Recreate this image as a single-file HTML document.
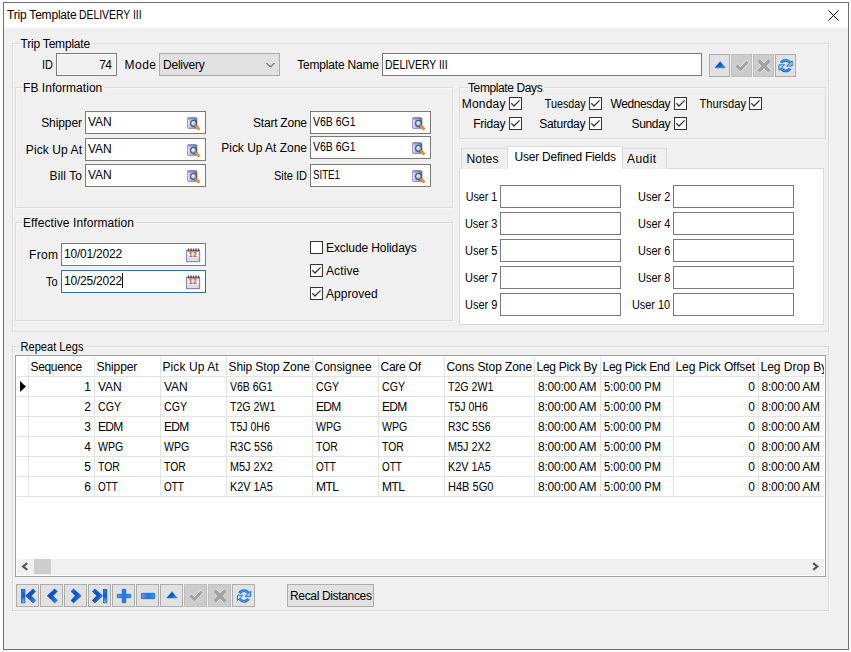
<!DOCTYPE html><html><head><meta charset="utf-8"><style>
html,body{margin:0;padding:0;background:#fff;width:851px;height:652px;overflow:hidden}
body{position:relative;font-family:"Liberation Sans",sans-serif;font-size:12px;color:#000}
div{position:absolute;box-sizing:border-box}
.t{white-space:nowrap;line-height:14px}
.r{text-align:right}
.cap{white-space:nowrap;line-height:14px;background:#f0f0f0;padding:0 1.5px 0 0.5px}
.grp{border:1px solid #dcdcdc}
.bx{border:1px solid #7a7a7a;background:#fff}
.ic{width:15px;height:15px}
.ic svg{display:block}
.cb{width:13px;height:13px;border:1px solid #333;background:#fff}
.cb svg{position:absolute;left:0;top:0}
.btn{border:1px solid #adadad;background:#e1e1e1}
.gl{background:#e3e3e3}
</style></head><body>
<svg width="0" height="0" style="position:absolute"><defs>
<linearGradient id="gBody" x1="0" y1="0" x2="1" y2="0"><stop offset="0" stop-color="#d8d8f4"/><stop offset="0.6" stop-color="#9c9cd4"/><stop offset="1" stop-color="#4e4e98"/></linearGradient>
<radialGradient id="gLens" cx="0.35" cy="0.35" r="0.7"><stop offset="0" stop-color="#f0fdff"/><stop offset="1" stop-color="#5cbbe8"/></radialGradient>
<linearGradient id="gBlue" x1="0" y1="0" x2="1" y2="1"><stop offset="0" stop-color="#2a6ad0"/><stop offset="0.45" stop-color="#0a50c6"/><stop offset="1" stop-color="#1c9cff"/></linearGradient>
<linearGradient id="gBlueV" x1="0" y1="0" x2="0" y2="1"><stop offset="0" stop-color="#2a7ee8"/><stop offset="0.5" stop-color="#0c5ad0"/><stop offset="1" stop-color="#6cc8ff"/></linearGradient>
<linearGradient id="gBlueH" x1="0" y1="0" x2="1" y2="0"><stop offset="0" stop-color="#6a9ae0"/><stop offset="0.5" stop-color="#1a78ea"/><stop offset="1" stop-color="#10a8ff"/></linearGradient>
</defs></svg>
<div style="left:3px;top:2px;width:846px;height:648px;border:1px solid #707070;background:#f0f0f0"></div>
<div style="left:4px;top:3px;width:844px;height:25px;background:#fff"></div>
<div class="t" style="left:7px;top:8px;letter-spacing:-0.2px;">Trip Template</div>
<div class="t" style="left:79.2px;top:8px;letter-spacing:0.0px;transform:scaleX(0.8657);transform-origin:0 0;">DELIVERY III</div>
<svg style="position:absolute;left:828px;top:10px" width="11" height="11" viewBox="0 0 11 11"><path d="M0.5 0.5 L10.5 10.5 M10.5 0.5 L0.5 10.5" stroke="#000" stroke-width="1"/></svg>
<div style="left:13px;top:44px;width:817px;height:289px;border:1px solid #f5f5f5"></div>
<div class="grp" style="left:12px;top:43px;width:817px;height:289px"></div>
<div class="cap" style="left:20px;top:37px;letter-spacing:-0.2px;">Trip Template</div>
<div class="t r" style="right:798.5px;top:58px;letter-spacing:0.0px;margin-right:-0.0px;transform:scaleX(0.9091);transform-origin:100% 0;">ID</div>
<div style="left:56px;top:53px;width:61px;height:23px;border:1px solid #7a7a7a;box-shadow:inset 0 0 0 1px #fff;background:#f0f0f0"></div>
<div class="t r" style="right:739px;top:58px;letter-spacing:-0.5px;margin-right:0.5px;">74</div>
<div class="t r" style="right:695px;top:58px;letter-spacing:0.467px;margin-right:-0.467px;">Mode</div>
<div class="btn" style="left:159px;top:53px;width:121px;height:23px"></div>
<div class="t" style="left:163px;top:58px;letter-spacing:-0.214px;">Delivery</div>
<svg style="position:absolute;left:266.4px;top:61.8px" width="10" height="7" viewBox="0 0 10 7"><path d="M0.5 1 L4.5 5 L8.5 1" fill="none" stroke="#333" stroke-width="1"/></svg>
<div class="t r" style="right:472px;top:58px;letter-spacing:-0.183px;margin-right:0.183px;">Template Name</div>
<div class="bx" style="left:382px;top:53px;width:320px;height:23px;"></div>
<div class="t" style="left:385px;top:58px;letter-spacing:0.0px;transform:scaleX(0.8657);transform-origin:0 0;">DELIVERY III</div>
<div class="btn" style="left:709px;top:54px;width:21px;height:23px;"></div>
<div class="btn" style="left:731px;top:54px;width:21px;height:23px;background:#cccccc;border-color:#bfbfbf"></div>
<div class="btn" style="left:753px;top:54px;width:21px;height:23px;background:#cccccc;border-color:#bfbfbf"></div>
<div class="btn" style="left:775px;top:54px;width:21px;height:23px;"></div>
<svg style="position:absolute;left:709px;top:54px" width="21" height="23" viewBox="0 0 21 23"><path d="M6 13.8 L11.1 7.6 L16.2 13.8 Z" fill="url(#gBlue)" stroke="#1560d0" stroke-width="0.5" stroke-linejoin="round"/></svg>
<svg style="position:absolute;left:731px;top:54px" width="21" height="23" viewBox="0 0 21 23"><path transform="translate(3.8 6)" d="M0 6.5 L2.7 3.8 L5.7 6.8 L11.7 0 L14.4 2.7 L5.7 12 Z" fill="#a2a2a2" stroke="#eeeeee" stroke-width="0.8" stroke-linejoin="miter"/></svg>
<svg style="position:absolute;left:753px;top:54px" width="21" height="23" viewBox="0 0 21 23"><g transform="translate(4 4.8)"><path d="M1.6 1.6 L12.4 12.4 M12.4 1.6 L1.6 12.4" stroke="#eeeeee" stroke-width="4.9"/><path d="M1.6 1.6 L12.4 12.4 M12.4 1.6 L1.6 12.4" stroke="#a2a2a2" stroke-width="3.7"/></g></svg>
<svg style="position:absolute;left:775px;top:54px" width="21" height="23" viewBox="0 0 21 23"><g transform="translate(0.6 1.6)"><path d="M5.51 7.19 A5.3 5.3 0 0 1 14.34 6.96" fill="none" stroke="#1565d8" stroke-width="2.8"/><path d="M5.51 7.19 A5.3 5.3 0 0 1 14.34 6.96" fill="none" stroke="#3a98f4" stroke-width="1.4"/><path d="M16.6 5.2 L16.6 10.4 L11 10.4 Z" fill="#9ad4ff" stroke="#1565d8" stroke-width="0.9" stroke-linejoin="round"/><path d="M14.49 12.81 A5.3 5.3 0 0 1 5.66 13.04" fill="none" stroke="#1565d8" stroke-width="2.8"/><path d="M14.49 12.81 A5.3 5.3 0 0 1 5.66 13.04" fill="none" stroke="#3a98f4" stroke-width="1.4"/><path d="M3.4 9.2 L3.4 14.7 L9 9.2 Z" fill="#b8e2ff" stroke="#1565d8" stroke-width="0.9" stroke-linejoin="round"/></g></svg>
<div style="left:16px;top:88px;width:438px;height:121px;border:1px solid #f5f5f5"></div>
<div class="grp" style="left:15px;top:87px;width:438px;height:121px"></div>
<div class="cap" style="left:22.5px;top:81px;letter-spacing:0.046px;">FB Information</div>
<div class="t r" style="right:769px;top:116px;letter-spacing:-0.083px;margin-right:0.083px;">Shipper</div>
<div class="bx" style="left:85px;top:111px;width:121px;height:23px;"></div>
<div class="t" style="left:88px;top:115px;letter-spacing:-0.1px;">VAN</div>
<div class="ic" style="left:187px;top:117px"><svg width="15" height="15" viewBox="0 0 15 15"><defs><linearGradient id="gTop" x1="0" y1="0" x2="0" y2="1"><stop offset="0" stop-color="#6a6ab0" stop-opacity="0.9"/><stop offset="0.25" stop-color="#9a9ad0" stop-opacity="0"/></linearGradient></defs><rect x="0.4" y="0.4" width="9.6" height="11.2" rx="1.6" fill="url(#gBody)" stroke="#8080b8" stroke-width="0.8"/><rect x="0.8" y="0.8" width="8.8" height="10.4" rx="1.2" fill="url(#gTop)"/><path d="M1.8 3v6.5" stroke="#ffffff" stroke-width="0.9" stroke-dasharray="1.2 0.9" opacity="0.8"/><circle cx="6.5" cy="6.4" r="2.9" fill="url(#gLens)" stroke="#50505e" stroke-width="1.1"/><path d="M9.2 9.2 L11.6 11.7" stroke="#f27c1c" stroke-width="2.7" stroke-linecap="round"/><path d="M9.8 9.9 L11.2 11.3" stroke="#ffd040" stroke-width="0.8" stroke-linecap="round"/></svg></div>
<div class="t r" style="right:769px;top:143px;letter-spacing:0.089px;margin-right:-0.089px;">Pick Up At</div>
<div class="bx" style="left:85px;top:138px;width:121px;height:23px;"></div>
<div class="t" style="left:88px;top:142px;letter-spacing:-0.1px;">VAN</div>
<div class="ic" style="left:187px;top:144px"><svg width="15" height="15" viewBox="0 0 15 15"><defs><linearGradient id="gTop" x1="0" y1="0" x2="0" y2="1"><stop offset="0" stop-color="#6a6ab0" stop-opacity="0.9"/><stop offset="0.25" stop-color="#9a9ad0" stop-opacity="0"/></linearGradient></defs><rect x="0.4" y="0.4" width="9.6" height="11.2" rx="1.6" fill="url(#gBody)" stroke="#8080b8" stroke-width="0.8"/><rect x="0.8" y="0.8" width="8.8" height="10.4" rx="1.2" fill="url(#gTop)"/><path d="M1.8 3v6.5" stroke="#ffffff" stroke-width="0.9" stroke-dasharray="1.2 0.9" opacity="0.8"/><circle cx="6.5" cy="6.4" r="2.9" fill="url(#gLens)" stroke="#50505e" stroke-width="1.1"/><path d="M9.2 9.2 L11.6 11.7" stroke="#f27c1c" stroke-width="2.7" stroke-linecap="round"/><path d="M9.8 9.9 L11.2 11.3" stroke="#ffd040" stroke-width="0.8" stroke-linecap="round"/></svg></div>
<div class="t r" style="right:769px;top:169px;letter-spacing:0.1px;margin-right:-0.1px;">Bill To</div>
<div class="bx" style="left:85px;top:164px;width:121px;height:23px;"></div>
<div class="t" style="left:88px;top:168px;letter-spacing:-0.1px;">VAN</div>
<div class="ic" style="left:187px;top:170px"><svg width="15" height="15" viewBox="0 0 15 15"><defs><linearGradient id="gTop" x1="0" y1="0" x2="0" y2="1"><stop offset="0" stop-color="#6a6ab0" stop-opacity="0.9"/><stop offset="0.25" stop-color="#9a9ad0" stop-opacity="0"/></linearGradient></defs><rect x="0.4" y="0.4" width="9.6" height="11.2" rx="1.6" fill="url(#gBody)" stroke="#8080b8" stroke-width="0.8"/><rect x="0.8" y="0.8" width="8.8" height="10.4" rx="1.2" fill="url(#gTop)"/><path d="M1.8 3v6.5" stroke="#ffffff" stroke-width="0.9" stroke-dasharray="1.2 0.9" opacity="0.8"/><circle cx="6.5" cy="6.4" r="2.9" fill="url(#gLens)" stroke="#50505e" stroke-width="1.1"/><path d="M9.2 9.2 L11.6 11.7" stroke="#f27c1c" stroke-width="2.7" stroke-linecap="round"/><path d="M9.8 9.9 L11.2 11.3" stroke="#ffd040" stroke-width="0.8" stroke-linecap="round"/></svg></div>
<div class="t r" style="right:544px;top:116px;letter-spacing:-0.233px;margin-right:0.233px;">Start Zone</div>
<div class="bx" style="left:310px;top:111px;width:121px;height:23px;"></div>
<div class="t" style="left:313px;top:115px;letter-spacing:0.0px;transform:scaleX(0.8729);transform-origin:0 0;">V6B 6G1</div>
<div class="ic" style="left:412px;top:117px"><svg width="15" height="15" viewBox="0 0 15 15"><defs><linearGradient id="gTop" x1="0" y1="0" x2="0" y2="1"><stop offset="0" stop-color="#6a6ab0" stop-opacity="0.9"/><stop offset="0.25" stop-color="#9a9ad0" stop-opacity="0"/></linearGradient></defs><rect x="0.4" y="0.4" width="9.6" height="11.2" rx="1.6" fill="url(#gBody)" stroke="#8080b8" stroke-width="0.8"/><rect x="0.8" y="0.8" width="8.8" height="10.4" rx="1.2" fill="url(#gTop)"/><path d="M1.8 3v6.5" stroke="#ffffff" stroke-width="0.9" stroke-dasharray="1.2 0.9" opacity="0.8"/><circle cx="6.5" cy="6.4" r="2.9" fill="url(#gLens)" stroke="#50505e" stroke-width="1.1"/><path d="M9.2 9.2 L11.6 11.7" stroke="#f27c1c" stroke-width="2.7" stroke-linecap="round"/><path d="M9.8 9.9 L11.2 11.3" stroke="#ffd040" stroke-width="0.8" stroke-linecap="round"/></svg></div>
<div class="t r" style="right:544px;top:141px;letter-spacing:-0.021px;margin-right:0.021px;">Pick Up At Zone</div>
<div class="bx" style="left:310px;top:136px;width:121px;height:23px;"></div>
<div class="t" style="left:313px;top:140px;letter-spacing:0.0px;transform:scaleX(0.8729);transform-origin:0 0;">V6B 6G1</div>
<div class="ic" style="left:412px;top:142px"><svg width="15" height="15" viewBox="0 0 15 15"><defs><linearGradient id="gTop" x1="0" y1="0" x2="0" y2="1"><stop offset="0" stop-color="#6a6ab0" stop-opacity="0.9"/><stop offset="0.25" stop-color="#9a9ad0" stop-opacity="0"/></linearGradient></defs><rect x="0.4" y="0.4" width="9.6" height="11.2" rx="1.6" fill="url(#gBody)" stroke="#8080b8" stroke-width="0.8"/><rect x="0.8" y="0.8" width="8.8" height="10.4" rx="1.2" fill="url(#gTop)"/><path d="M1.8 3v6.5" stroke="#ffffff" stroke-width="0.9" stroke-dasharray="1.2 0.9" opacity="0.8"/><circle cx="6.5" cy="6.4" r="2.9" fill="url(#gLens)" stroke="#50505e" stroke-width="1.1"/><path d="M9.2 9.2 L11.6 11.7" stroke="#f27c1c" stroke-width="2.7" stroke-linecap="round"/><path d="M9.8 9.9 L11.2 11.3" stroke="#ffd040" stroke-width="0.8" stroke-linecap="round"/></svg></div>
<div class="t r" style="right:544px;top:169px;letter-spacing:0.0px;margin-right:-0.0px;transform:scaleX(0.92);transform-origin:100% 0;">Site ID</div>
<div class="bx" style="left:310px;top:164px;width:121px;height:23px;"></div>
<div class="t" style="left:313px;top:168px;letter-spacing:0.0px;transform:scaleX(0.8094);transform-origin:0 0;">SITE1</div>
<div class="ic" style="left:412px;top:170px"><svg width="15" height="15" viewBox="0 0 15 15"><defs><linearGradient id="gTop" x1="0" y1="0" x2="0" y2="1"><stop offset="0" stop-color="#6a6ab0" stop-opacity="0.9"/><stop offset="0.25" stop-color="#9a9ad0" stop-opacity="0"/></linearGradient></defs><rect x="0.4" y="0.4" width="9.6" height="11.2" rx="1.6" fill="url(#gBody)" stroke="#8080b8" stroke-width="0.8"/><rect x="0.8" y="0.8" width="8.8" height="10.4" rx="1.2" fill="url(#gTop)"/><path d="M1.8 3v6.5" stroke="#ffffff" stroke-width="0.9" stroke-dasharray="1.2 0.9" opacity="0.8"/><circle cx="6.5" cy="6.4" r="2.9" fill="url(#gLens)" stroke="#50505e" stroke-width="1.1"/><path d="M9.2 9.2 L11.6 11.7" stroke="#f27c1c" stroke-width="2.7" stroke-linecap="round"/><path d="M9.8 9.9 L11.2 11.3" stroke="#ffd040" stroke-width="0.8" stroke-linecap="round"/></svg></div>
<div style="left:16px;top:223px;width:438px;height:99px;border:1px solid #f5f5f5"></div>
<div class="grp" style="left:15px;top:222px;width:438px;height:99px"></div>
<div class="cap" style="left:22.5px;top:216px;letter-spacing:0.09px;">Effective Information</div>
<div class="t r" style="right:793px;top:248px;letter-spacing:0.333px;margin-right:-0.333px;">From</div>
<div class="bx" style="left:61px;top:243px;width:145px;height:23px;"></div>
<div class="t" style="left:64px;top:247px;letter-spacing:-0.211px;">10/01/2022</div>
<div class="ic" style="left:184px;top:246px;width:18px;height:18px"><svg width="18" height="18" viewBox="0 0 18 18"><defs><linearGradient id="gCal" x1="0" y1="0" x2="0" y2="1"><stop offset="0" stop-color="#ffffff"/><stop offset="1" stop-color="#dfe4f6"/></linearGradient></defs><rect x="2.6" y="4.4" width="13" height="11.2" fill="url(#gCal)" stroke="#8282c2" stroke-width="1.1"/><path d="M3.6 12.6h11 M3.6 13.9h11" stroke="#d0d8f0" stroke-width="0.9"/><path d="M3.8 3.8h11.4" stroke="#3a3a3a" stroke-width="2.4" stroke-dasharray="1.5 1" opacity="0.85"/><path d="M4 5.3h11" stroke="#666" stroke-width="0.8"/><text x="4.9" y="11.3" font-family="Liberation Sans" font-weight="bold" font-size="6.3" letter-spacing="0.9" fill="#ff4200" stroke="#ff5a10" stroke-width="0.2">12</text><rect x="14" y="12" width="1.1" height="2.6" fill="#f2b27a"/></svg></div>
<div class="t r" style="right:793px;top:275px;letter-spacing:0.0px;margin-right:-0.0px;transform:scaleX(0.9167);transform-origin:100% 0;">To</div>
<div class="bx" style="left:61px;top:270px;width:145px;height:23px;border-color:#0078d7"></div>
<div class="t" style="left:64px;top:274px;letter-spacing:-0.211px;">10/25/2022</div>
<div class="ic" style="left:184px;top:273px;width:18px;height:18px"><svg width="18" height="18" viewBox="0 0 18 18"><defs><linearGradient id="gCal" x1="0" y1="0" x2="0" y2="1"><stop offset="0" stop-color="#ffffff"/><stop offset="1" stop-color="#dfe4f6"/></linearGradient></defs><rect x="2.6" y="4.4" width="13" height="11.2" fill="url(#gCal)" stroke="#8282c2" stroke-width="1.1"/><path d="M3.6 12.6h11 M3.6 13.9h11" stroke="#d0d8f0" stroke-width="0.9"/><path d="M3.8 3.8h11.4" stroke="#3a3a3a" stroke-width="2.4" stroke-dasharray="1.5 1" opacity="0.85"/><path d="M4 5.3h11" stroke="#666" stroke-width="0.8"/><text x="4.9" y="11.3" font-family="Liberation Sans" font-weight="bold" font-size="6.3" letter-spacing="0.9" fill="#ff4200" stroke="#ff5a10" stroke-width="0.2">12</text><rect x="14" y="12" width="1.1" height="2.6" fill="#f2b27a"/></svg></div>
<div style="left:122px;top:273px;width:1px;height:15px;background:#000"></div>
<div class="cb" style="left:310px;top:241px"></div>
<div class="t" style="left:326px;top:241px;letter-spacing:-0.093px;">Exclude Holidays</div>
<div class="cb" style="left:310px;top:264px"><svg width="11" height="11" viewBox="0 0 11 11"><path d="M1.3 5.3 L4 8 L9.6 2.4" fill="none" stroke="#333" stroke-width="1.25"/></svg></div>
<div class="t" style="left:326px;top:264px;letter-spacing:0.12px;">Active</div>
<div class="cb" style="left:310px;top:287px"><svg width="11" height="11" viewBox="0 0 11 11"><path d="M1.3 5.3 L4 8 L9.6 2.4" fill="none" stroke="#333" stroke-width="1.25"/></svg></div>
<div class="t" style="left:326px;top:287px;letter-spacing:0.029px;">Approved</div>
<div style="left:460px;top:88px;width:367px;height:52px;border:1px solid #f5f5f5"></div>
<div class="grp" style="left:459px;top:87px;width:367px;height:52px"></div>
<div class="cap" style="left:467.5px;top:81px;letter-spacing:-0.392px;">Template Days</div>
<div class="t r" style="right:345.5px;top:97px;letter-spacing:0.2px;margin-right:-0.2px;">Monday</div>
<div class="cb" style="left:509px;top:97px"><svg width="11" height="11" viewBox="0 0 11 11"><path d="M1.3 5.3 L4 8 L9.6 2.4" fill="none" stroke="#333" stroke-width="1.25"/></svg></div>
<div class="t r" style="right:265.5px;top:97px;letter-spacing:0.0px;margin-right:-0.0px;transform:scaleX(0.8935);transform-origin:100% 0;">Tuesday</div>
<div class="cb" style="left:589px;top:97px"><svg width="11" height="11" viewBox="0 0 11 11"><path d="M1.3 5.3 L4 8 L9.6 2.4" fill="none" stroke="#333" stroke-width="1.25"/></svg></div>
<div class="t r" style="right:180.5px;top:97px;letter-spacing:-0.388px;margin-right:0.388px;">Wednesday</div>
<div class="cb" style="left:674px;top:97px"><svg width="11" height="11" viewBox="0 0 11 11"><path d="M1.3 5.3 L4 8 L9.6 2.4" fill="none" stroke="#333" stroke-width="1.25"/></svg></div>
<div class="t r" style="right:105.29999999999995px;top:97px;letter-spacing:0.0px;margin-right:-0.0px;transform:scaleX(0.93);transform-origin:100% 0;">Thursday</div>
<div class="cb" style="left:749px;top:97px"><svg width="11" height="11" viewBox="0 0 11 11"><path d="M1.3 5.3 L4 8 L9.6 2.4" fill="none" stroke="#333" stroke-width="1.25"/></svg></div>
<div class="t r" style="right:345.5px;top:117px;letter-spacing:-0.2px;margin-right:0.2px;">Friday</div>
<div class="cb" style="left:509px;top:117px"><svg width="11" height="11" viewBox="0 0 11 11"><path d="M1.3 5.3 L4 8 L9.6 2.4" fill="none" stroke="#333" stroke-width="1.25"/></svg></div>
<div class="t r" style="right:265.5px;top:117px;letter-spacing:-0.243px;margin-right:0.243px;">Saturday</div>
<div class="cb" style="left:589px;top:117px"><svg width="11" height="11" viewBox="0 0 11 11"><path d="M1.3 5.3 L4 8 L9.6 2.4" fill="none" stroke="#333" stroke-width="1.25"/></svg></div>
<div class="t r" style="right:180.5px;top:117px;letter-spacing:-0.34px;margin-right:0.34px;">Sunday</div>
<div class="cb" style="left:674px;top:117px"><svg width="11" height="11" viewBox="0 0 11 11"><path d="M1.3 5.3 L4 8 L9.6 2.4" fill="none" stroke="#333" stroke-width="1.25"/></svg></div>
<div style="left:459px;top:168px;width:365px;height:157px;border:1px solid #d9d9d9;background:#fff"></div>
<div style="left:461px;top:148px;width:47px;height:21px;border:1px solid #d9d9d9;border-bottom:none;background:#f0f0f0"></div>
<div style="left:622px;top:148px;width:45px;height:21px;border:1px solid #d9d9d9;border-bottom:none;background:#f0f0f0"></div>
<div style="left:507px;top:146px;width:116px;height:23px;border:1px solid #d9d9d9;border-bottom:none;background:#fff"></div>
<div class="t" style="left:466.5px;top:152px;letter-spacing:0.15px;">Notes</div>
<div class="t" style="left:514.5px;top:150px;letter-spacing:-0.222px;">User Defined Fields</div>
<div class="t" style="left:627px;top:152px;letter-spacing:0.45px;">Audit</div>
<div class="t r" style="right:354px;top:190px;letter-spacing:0.0px;margin-right:-0.0px;transform:scaleX(0.8971);transform-origin:100% 0;">User 1</div>
<div class="bx" style="left:500px;top:185px;width:121px;height:23px;"></div>
<div class="t r" style="right:181px;top:190px;letter-spacing:0.0px;margin-right:-0.0px;transform:scaleX(0.9147);transform-origin:100% 0;">User 2</div>
<div class="bx" style="left:673px;top:185px;width:121px;height:23px;"></div>
<div class="t r" style="right:354px;top:217px;letter-spacing:0.0px;margin-right:-0.0px;transform:scaleX(0.9176);transform-origin:100% 0;">User 3</div>
<div class="bx" style="left:500px;top:212px;width:121px;height:23px;"></div>
<div class="t r" style="right:181px;top:217px;letter-spacing:0.0px;margin-right:-0.0px;transform:scaleX(0.9147);transform-origin:100% 0;">User 4</div>
<div class="bx" style="left:673px;top:212px;width:121px;height:23px;"></div>
<div class="t r" style="right:354px;top:244px;letter-spacing:0.0px;margin-right:-0.0px;transform:scaleX(0.9147);transform-origin:100% 0;">User 5</div>
<div class="bx" style="left:500px;top:239px;width:121px;height:23px;"></div>
<div class="t r" style="right:181px;top:244px;letter-spacing:0.0px;margin-right:-0.0px;transform:scaleX(0.9147);transform-origin:100% 0;">User 6</div>
<div class="bx" style="left:673px;top:239px;width:121px;height:23px;"></div>
<div class="t r" style="right:354px;top:271px;letter-spacing:0.0px;margin-right:-0.0px;transform:scaleX(0.9147);transform-origin:100% 0;">User 7</div>
<div class="bx" style="left:500px;top:266px;width:121px;height:23px;"></div>
<div class="t r" style="right:181px;top:271px;letter-spacing:0.0px;margin-right:-0.0px;transform:scaleX(0.9147);transform-origin:100% 0;">User 8</div>
<div class="bx" style="left:673px;top:266px;width:121px;height:23px;"></div>
<div class="t r" style="right:354px;top:298px;letter-spacing:0.0px;margin-right:-0.0px;transform:scaleX(0.9147);transform-origin:100% 0;">User 9</div>
<div class="bx" style="left:500px;top:293px;width:121px;height:23px;"></div>
<div class="t r" style="right:181px;top:298px;letter-spacing:0.0px;margin-right:-0.0px;transform:scaleX(0.9073);transform-origin:100% 0;">User 10</div>
<div class="bx" style="left:673px;top:293px;width:121px;height:23px;"></div>
<div style="left:13px;top:347px;width:817px;height:265px;border:1px solid #f5f5f5"></div>
<div class="grp" style="left:12px;top:346px;width:817px;height:265px"></div>
<div class="cap" style="left:20px;top:340px;letter-spacing:0.0px;transform:scaleX(0.9254);transform-origin:0 0;">Repeat Legs</div>
<div style="left:15px;top:355px;width:811px;height:222px;border:1px solid #a0a0a0;background:#fff"></div>
<div class="gl" style="left:17px;top:376px;width:807px;height:1px"></div>
<div class="gl" style="left:17px;top:396px;width:807px;height:1px"></div>
<div class="gl" style="left:17px;top:416px;width:807px;height:1px"></div>
<div class="gl" style="left:17px;top:436px;width:807px;height:1px"></div>
<div class="gl" style="left:17px;top:456px;width:807px;height:1px"></div>
<div class="gl" style="left:17px;top:476px;width:807px;height:1px"></div>
<div class="gl" style="left:17px;top:496px;width:807px;height:1px"></div>
<div class="gl" style="left:28px;top:357px;width:1px;height:140px"></div>
<div class="gl" style="left:94px;top:357px;width:1px;height:140px"></div>
<div class="gl" style="left:160px;top:357px;width:1px;height:140px"></div>
<div class="gl" style="left:226px;top:357px;width:1px;height:140px"></div>
<div class="gl" style="left:312px;top:357px;width:1px;height:140px"></div>
<div class="gl" style="left:378px;top:357px;width:1px;height:140px"></div>
<div class="gl" style="left:444px;top:357px;width:1px;height:140px"></div>
<div class="gl" style="left:534px;top:357px;width:1px;height:140px"></div>
<div class="gl" style="left:600px;top:357px;width:1px;height:140px"></div>
<div class="gl" style="left:673px;top:357px;width:1px;height:140px"></div>
<div class="gl" style="left:758px;top:357px;width:1px;height:140px"></div>
<div class="t" style="left:30.5px;top:360px;letter-spacing:-0.343px;">Sequence</div>
<div class="t" style="left:96.5px;top:360px;letter-spacing:-0.083px;">Shipper</div>
<div class="t" style="left:162.5px;top:360px;letter-spacing:0.089px;">Pick Up At</div>
<div class="t" style="left:228.5px;top:360px;letter-spacing:-0.1px;">Ship Stop Zone</div>
<div class="t" style="left:314.5px;top:360px;letter-spacing:-0.037px;">Consignee</div>
<div class="t" style="left:380.5px;top:360px;letter-spacing:-0.25px;">Care Of</div>
<div class="t" style="left:446.5px;top:360px;letter-spacing:-0.085px;">Cons Stop Zone</div>
<div class="t" style="left:536.5px;top:360px;letter-spacing:-0.27px;">Leg Pick By</div>
<div class="t" style="left:602.5px;top:360px;letter-spacing:-0.291px;">Leg Pick End</div>
<div class="t" style="left:675.5px;top:360px;letter-spacing:-0.107px;">Leg Pick Offset</div>
<div style="left:758px;top:356px;width:65.5px;height:20px;overflow:hidden">
<div class="t" style="left:2.5px;top:4px;letter-spacing:0.0px">Leg Drop By</div></div>
<div class="t r" style="right:760px;top:380px;letter-spacing:0.0px;margin-right:-0.0px;">1</div>
<div class="t" style="left:98px;top:380px;letter-spacing:-0.1px;">VAN</div>
<div class="t" style="left:164px;top:380px;letter-spacing:-0.1px;">VAN</div>
<div class="t" style="left:230px;top:380px;letter-spacing:0.0px;transform:scaleX(0.8729);transform-origin:0 0;">V6B 6G1</div>
<div class="t" style="left:316px;top:380px;letter-spacing:0.0px;transform:scaleX(0.884);transform-origin:0 0;">CGY</div>
<div class="t" style="left:382px;top:380px;letter-spacing:0.0px;transform:scaleX(0.884);transform-origin:0 0;">CGY</div>
<div class="t" style="left:448px;top:380px;letter-spacing:0.0px;transform:scaleX(0.8824);transform-origin:0 0;">T2G 2W1</div>
<div class="t" style="left:538px;top:380px;letter-spacing:-0.233px;">8:00:00 AM</div>
<div class="t" style="left:604px;top:380px;letter-spacing:0.0px;transform:scaleX(0.93);transform-origin:0 0;">5:00:00 PM</div>
<div class="t r" style="right:96px;top:380px;letter-spacing:0.0px;margin-right:-0.0px;">0</div>
<div class="t" style="left:761.5px;top:380px;letter-spacing:-0.233px;">8:00:00 AM</div>
<div class="t r" style="right:760px;top:400px;letter-spacing:0.0px;margin-right:-0.0px;">2</div>
<div class="t" style="left:98px;top:400px;letter-spacing:0.0px;transform:scaleX(0.884);transform-origin:0 0;">CGY</div>
<div class="t" style="left:164px;top:400px;letter-spacing:0.0px;transform:scaleX(0.884);transform-origin:0 0;">CGY</div>
<div class="t" style="left:230px;top:400px;letter-spacing:0.0px;transform:scaleX(0.8824);transform-origin:0 0;">T2G 2W1</div>
<div class="t" style="left:316px;top:400px;letter-spacing:-0.75px;">EDM</div>
<div class="t" style="left:382px;top:400px;letter-spacing:-0.75px;">EDM</div>
<div class="t" style="left:448px;top:400px;letter-spacing:0.0px;transform:scaleX(0.8778);transform-origin:0 0;">T5J 0H6</div>
<div class="t" style="left:538px;top:400px;letter-spacing:-0.233px;">8:00:00 AM</div>
<div class="t" style="left:604px;top:400px;letter-spacing:0.0px;transform:scaleX(0.93);transform-origin:0 0;">5:00:00 PM</div>
<div class="t r" style="right:96px;top:400px;letter-spacing:0.0px;margin-right:-0.0px;">0</div>
<div class="t" style="left:761.5px;top:400px;letter-spacing:-0.233px;">8:00:00 AM</div>
<div class="t r" style="right:760px;top:420px;letter-spacing:0.0px;margin-right:-0.0px;">3</div>
<div class="t" style="left:98px;top:420px;letter-spacing:-0.75px;">EDM</div>
<div class="t" style="left:164px;top:420px;letter-spacing:-0.75px;">EDM</div>
<div class="t" style="left:230px;top:420px;letter-spacing:0.0px;transform:scaleX(0.8778);transform-origin:0 0;">T5J 0H6</div>
<div class="t" style="left:316px;top:420px;letter-spacing:0.0px;transform:scaleX(0.8821);transform-origin:0 0;">WPG</div>
<div class="t" style="left:382px;top:420px;letter-spacing:0.0px;transform:scaleX(0.8821);transform-origin:0 0;">WPG</div>
<div class="t" style="left:448px;top:420px;letter-spacing:0.0px;transform:scaleX(0.8766);transform-origin:0 0;">R3C 5S6</div>
<div class="t" style="left:538px;top:420px;letter-spacing:-0.233px;">8:00:00 AM</div>
<div class="t" style="left:604px;top:420px;letter-spacing:0.0px;transform:scaleX(0.93);transform-origin:0 0;">5:00:00 PM</div>
<div class="t r" style="right:96px;top:420px;letter-spacing:0.0px;margin-right:-0.0px;">0</div>
<div class="t" style="left:761.5px;top:420px;letter-spacing:-0.233px;">8:00:00 AM</div>
<div class="t r" style="right:760px;top:440px;letter-spacing:0.0px;margin-right:-0.0px;">4</div>
<div class="t" style="left:98px;top:440px;letter-spacing:0.0px;transform:scaleX(0.8821);transform-origin:0 0;">WPG</div>
<div class="t" style="left:164px;top:440px;letter-spacing:0.0px;transform:scaleX(0.8821);transform-origin:0 0;">WPG</div>
<div class="t" style="left:230px;top:440px;letter-spacing:0.0px;transform:scaleX(0.8766);transform-origin:0 0;">R3C 5S6</div>
<div class="t" style="left:316px;top:440px;letter-spacing:0.0px;transform:scaleX(0.864);transform-origin:0 0;">TOR</div>
<div class="t" style="left:382px;top:440px;letter-spacing:0.0px;transform:scaleX(0.864);transform-origin:0 0;">TOR</div>
<div class="t" style="left:448px;top:440px;letter-spacing:0.0px;transform:scaleX(0.9043);transform-origin:0 0;">M5J 2X2</div>
<div class="t" style="left:538px;top:440px;letter-spacing:-0.233px;">8:00:00 AM</div>
<div class="t" style="left:604px;top:440px;letter-spacing:0.0px;transform:scaleX(0.93);transform-origin:0 0;">5:00:00 PM</div>
<div class="t r" style="right:96px;top:440px;letter-spacing:0.0px;margin-right:-0.0px;">0</div>
<div class="t" style="left:761.5px;top:440px;letter-spacing:-0.233px;">8:00:00 AM</div>
<div class="t r" style="right:760px;top:460px;letter-spacing:0.0px;margin-right:-0.0px;">5</div>
<div class="t" style="left:98px;top:460px;letter-spacing:0.0px;transform:scaleX(0.864);transform-origin:0 0;">TOR</div>
<div class="t" style="left:164px;top:460px;letter-spacing:0.0px;transform:scaleX(0.864);transform-origin:0 0;">TOR</div>
<div class="t" style="left:230px;top:460px;letter-spacing:0.0px;transform:scaleX(0.9043);transform-origin:0 0;">M5J 2X2</div>
<div class="t" style="left:316px;top:460px;letter-spacing:0.0px;transform:scaleX(0.825);transform-origin:0 0;">OTT</div>
<div class="t" style="left:382px;top:460px;letter-spacing:0.0px;transform:scaleX(0.825);transform-origin:0 0;">OTT</div>
<div class="t" style="left:448px;top:460px;letter-spacing:0.0px;transform:scaleX(0.9043);transform-origin:0 0;">K2V 1A5</div>
<div class="t" style="left:538px;top:460px;letter-spacing:-0.233px;">8:00:00 AM</div>
<div class="t" style="left:604px;top:460px;letter-spacing:0.0px;transform:scaleX(0.93);transform-origin:0 0;">5:00:00 PM</div>
<div class="t r" style="right:96px;top:460px;letter-spacing:0.0px;margin-right:-0.0px;">0</div>
<div class="t" style="left:761.5px;top:460px;letter-spacing:-0.233px;">8:00:00 AM</div>
<div class="t r" style="right:760px;top:480px;letter-spacing:0.0px;margin-right:-0.0px;">6</div>
<div class="t" style="left:98px;top:480px;letter-spacing:0.0px;transform:scaleX(0.825);transform-origin:0 0;">OTT</div>
<div class="t" style="left:164px;top:480px;letter-spacing:0.0px;transform:scaleX(0.825);transform-origin:0 0;">OTT</div>
<div class="t" style="left:230px;top:480px;letter-spacing:0.0px;transform:scaleX(0.9043);transform-origin:0 0;">K2V 1A5</div>
<div class="t" style="left:316px;top:480px;letter-spacing:-0.55px;">MTL</div>
<div class="t" style="left:382px;top:480px;letter-spacing:-0.55px;">MTL</div>
<div class="t" style="left:448px;top:480px;letter-spacing:0.0px;transform:scaleX(0.9208);transform-origin:0 0;">H4B 5G0</div>
<div class="t" style="left:538px;top:480px;letter-spacing:-0.233px;">8:00:00 AM</div>
<div class="t" style="left:604px;top:480px;letter-spacing:0.0px;transform:scaleX(0.93);transform-origin:0 0;">5:00:00 PM</div>
<div class="t r" style="right:96px;top:480px;letter-spacing:0.0px;margin-right:-0.0px;">0</div>
<div class="t" style="left:761.5px;top:480px;letter-spacing:-0.233px;">8:00:00 AM</div>
<svg style="position:absolute;left:20px;top:381px" width="7" height="12" viewBox="0 0 7 12"><path d="M0 0 L6 5.5 L0 11 Z" fill="#000"/></svg>
<div style="left:17px;top:559px;width:807px;height:16px;background:#f0f0f0"></div>
<div style="left:34px;top:559px;width:17px;height:15px;background:#cdcdcd"></div>
<svg style="position:absolute;left:21px;top:562px" width="8" height="9" viewBox="0 0 8 9"><path d="M6.2 1.2 L2.2 4.5 L6.2 7.8" fill="none" stroke="#555" stroke-width="2.2"/></svg>
<svg style="position:absolute;left:812px;top:562px" width="8" height="9" viewBox="0 0 8 9"><path d="M1.2 1.2 L5.2 4.5 L1.2 7.8" fill="none" stroke="#555" stroke-width="2.2"/></svg>
<div class="btn" style="left:16px;top:584px;width:23px;height:23px;"></div>
<div class="btn" style="left:40px;top:584px;width:23px;height:23px;"></div>
<div class="btn" style="left:64px;top:584px;width:23px;height:23px;"></div>
<div class="btn" style="left:88px;top:584px;width:23px;height:23px;"></div>
<div class="btn" style="left:112px;top:584px;width:23px;height:23px;"></div>
<div class="btn" style="left:136px;top:584px;width:23px;height:23px;"></div>
<div class="btn" style="left:160px;top:584px;width:23px;height:23px;"></div>
<div class="btn" style="left:184px;top:584px;width:23px;height:23px;background:#cccccc;border-color:#bfbfbf"></div>
<div class="btn" style="left:208px;top:584px;width:23px;height:23px;background:#cccccc;border-color:#bfbfbf"></div>
<div class="btn" style="left:232px;top:584px;width:23px;height:23px;"></div>
<svg style="position:absolute;left:16px;top:584px" width="23" height="23" viewBox="0 0 23 23"><rect x="5.3" y="5.3" width="3.6" height="13.6" fill="url(#gBlueV)" stroke="#0b4cb8" stroke-width="0.6"/><path d="M9.5 11.8 L17.0 4.9 L19.6 7.4 L15.3 11.8 L19.6 16.4 L17.0 18.9 Z" fill="url(#gBlue)" stroke="#0b4cb8" stroke-width="0.6"/></svg>
<svg style="position:absolute;left:40px;top:584px" width="23" height="23" viewBox="0 0 23 23"><path d="M7.2 11.8 L14.7 4.9 L17.3 7.4 L13.0 11.8 L17.3 16.4 L14.7 18.9 Z" fill="url(#gBlue)" stroke="#0b4cb8" stroke-width="0.6"/></svg>
<svg style="position:absolute;left:64px;top:584px" width="23" height="23" viewBox="0 0 23 23"><path d="M17.1 11.8 L9.600000000000001 4.9 L7.000000000000002 7.4 L11.3 11.8 L7.000000000000002 16.4 L9.600000000000001 18.9 Z" fill="url(#gBlue)" stroke="#0b4cb8" stroke-width="0.6"/></svg>
<svg style="position:absolute;left:88px;top:584px" width="23" height="23" viewBox="0 0 23 23"><path d="M14.5 11.8 L7.0 4.9 L4.4 7.4 L8.7 11.8 L4.4 16.4 L7.0 18.9 Z" fill="url(#gBlue)" stroke="#0b4cb8" stroke-width="0.6"/><rect x="15.3" y="5.3" width="3.6" height="13.6" fill="url(#gBlueV)" stroke="#0b4cb8" stroke-width="0.6"/></svg>
<svg style="position:absolute;left:112px;top:584px" width="23" height="23" viewBox="0 0 23 23"><path d="M5.3 10.3 H10.3 V5.3 H13.7 V10.3 H18.7 V13.7 H13.7 V18.7 H10.3 V13.7 H5.3 Z" fill="url(#gBlueH)" stroke="#0b4cb8" stroke-width="0.6"/></svg>
<svg style="position:absolute;left:136px;top:584px" width="23" height="23" viewBox="0 0 23 23"><rect x="5.3" y="9.3" width="13.4" height="5.4" rx="0.5" fill="url(#gBlueH)" stroke="#0b4cb8" stroke-width="0.6"/></svg>
<svg style="position:absolute;left:160px;top:584px" width="23" height="23" viewBox="0 0 23 23"><path d="M6.8 14 L11.950000000000001 7.7 L17.1 14 Z" fill="url(#gBlue)" stroke="#1560d0" stroke-width="0.5" stroke-linejoin="round"/></svg>
<svg style="position:absolute;left:184px;top:584px" width="23" height="23" viewBox="0 0 23 23"><path transform="translate(4.8 6)" d="M0 6.5 L2.7 3.8 L5.7 6.8 L11.7 0 L14.4 2.7 L5.7 12 Z" fill="#a2a2a2" stroke="#eeeeee" stroke-width="0.8" stroke-linejoin="miter"/></svg>
<svg style="position:absolute;left:208px;top:584px" width="23" height="23" viewBox="0 0 23 23"><g transform="translate(5 5)"><path d="M1.6 1.6 L12.4 12.4 M12.4 1.6 L1.6 12.4" stroke="#eeeeee" stroke-width="4.9"/><path d="M1.6 1.6 L12.4 12.4 M12.4 1.6 L1.6 12.4" stroke="#a2a2a2" stroke-width="3.7"/></g></svg>
<svg style="position:absolute;left:232px;top:584px" width="23" height="23" viewBox="0 0 23 23"><g transform="translate(2 2)"><path d="M5.51 7.19 A5.3 5.3 0 0 1 14.34 6.96" fill="none" stroke="#1565d8" stroke-width="2.8"/><path d="M5.51 7.19 A5.3 5.3 0 0 1 14.34 6.96" fill="none" stroke="#3a98f4" stroke-width="1.4"/><path d="M16.6 5.2 L16.6 10.4 L11 10.4 Z" fill="#9ad4ff" stroke="#1565d8" stroke-width="0.9" stroke-linejoin="round"/><path d="M14.49 12.81 A5.3 5.3 0 0 1 5.66 13.04" fill="none" stroke="#1565d8" stroke-width="2.8"/><path d="M14.49 12.81 A5.3 5.3 0 0 1 5.66 13.04" fill="none" stroke="#3a98f4" stroke-width="1.4"/><path d="M3.4 9.2 L3.4 14.7 L9 9.2 Z" fill="#b8e2ff" stroke="#1565d8" stroke-width="0.9" stroke-linejoin="round"/></g></svg>
<div class="btn" style="left:287px;top:584px;width:87px;height:23px"></div>
<div class="t" style="left:290px;top:589px;letter-spacing:-0.343px;">Recal Distances</div>
</body></html>
